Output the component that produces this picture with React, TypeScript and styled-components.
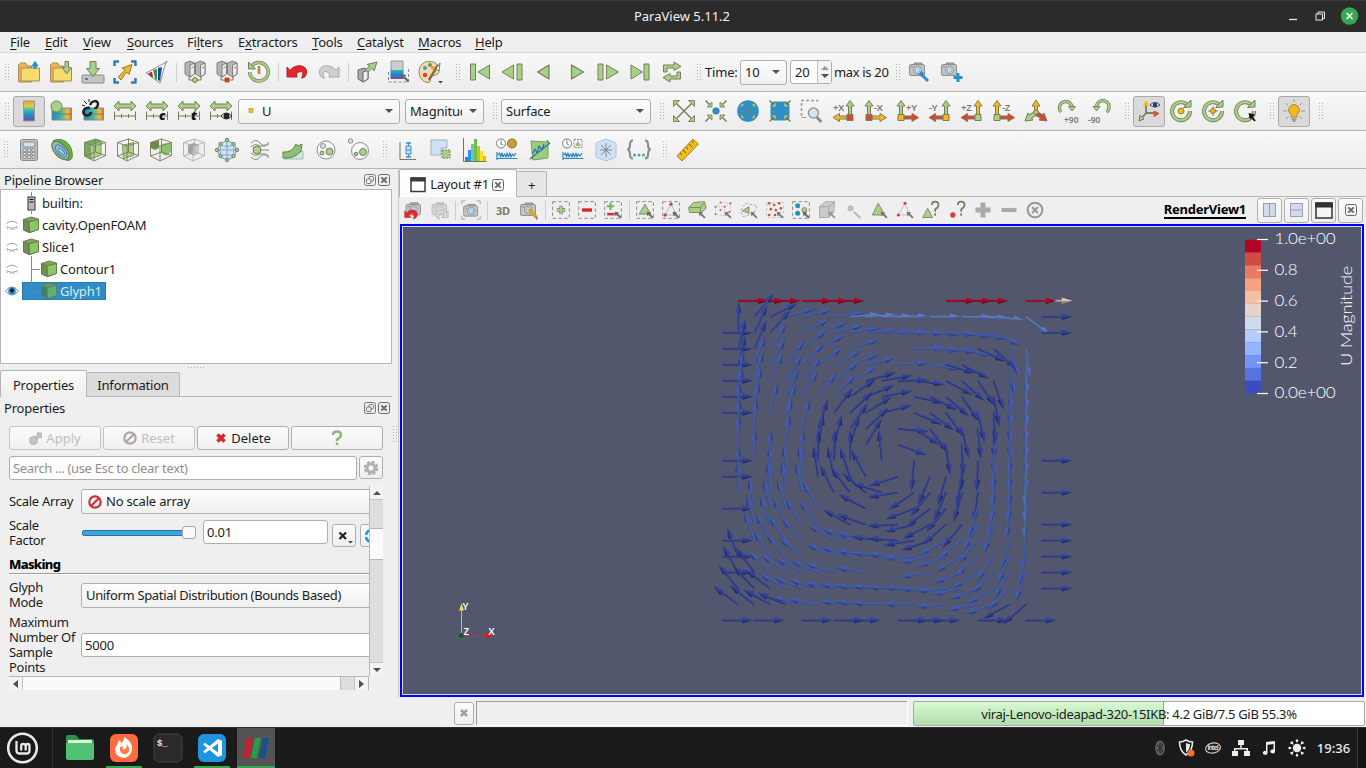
import React from "react";
import styled, { createGlobalStyle, css } from "styled-components";

const GREEN = "#a6d288";
const OLIVE = "#7b7b5c";
const BLUE = "#2a8fcc";
const YEL = "#f4ba1c";
const RED = "#dc4430";
const GREY = "#8c8c8c";

const Global = createGlobalStyle`
  * { box-sizing: border-box; }
  body { margin: 0; overflow: hidden; }
`;

/* ---------- frame ---------- */
const Screen = styled.div`
  width: 1366px;
  height: 768px;
  display: flex;
  flex-direction: column;
  background: #efefef;
  color: #1c1c1c;
  font: 13px/15px "Noto Sans", "Open Sans", sans-serif;
  letter-spacing: -0.2px;
  white-space: nowrap;
  overflow: hidden;
`;
const TitleBar = styled.header`
  height: 32px;
  flex: none;
  display: grid;
  grid-template-columns: 1fr auto 1fr;
  align-items: center;
  background: linear-gradient(#383838 0, #383838 1px, #2b2b2b 1px);
  color: #f2f2f2;
  letter-spacing: 0;
`;
const WindowTitle = styled.span`
  padding-right: 2px;
`;
const WindowControls = styled.div`
  display: flex;
  justify-content: flex-end;
  align-items: center;
  padding-right: 7px;
`;
const MenuBar = styled.nav`
  height: 21px;
  flex: none;
  display: flex;
  padding-left: 10px;
  align-items: center;
  border-bottom: 1px solid #d4d4d4;
  u { text-underline-offset: 2px; text-decoration-thickness: 1px; }
`;
const MenuItem = styled.span<{ $w: number }>`
  width: ${(p) => p.$w}px;
`;
const ToolBar = styled.div<{ $h: number }>`
  height: ${(p) => p.$h}px;
  flex: none;
  display: flex;
  align-items: center;
  background: linear-gradient(#f8f8f8, #ececec);
  border-bottom: 1px solid #b4b4b4;
`;
const HandleBox = styled.span<{ $w: number }>`
  width: ${(p) => p.$w}px;
  padding-left: ${(p) => (p.$w > 13 ? 5 : 1)}px;
  flex: none;
  display: flex;
  justify-content: center;
`;
const Sep = styled.i`
  width: 1px;
  height: 19px;
  margin: 0 2px 0 3px;
  flex: none;
  background: #cfcfcf;
`;
const ToolButton = styled.button<{ $w?: number; $on?: boolean }>`
  width: ${(p) => p.$w ?? 32}px;
  height: 31px;
  flex: none;
  padding: 0;
  display: flex;
  align-items: center;
  justify-content: center;
  border: 1px solid transparent;
  border-radius: 3px;
  background: none;
  ${(p) => p.$on && css`background: #dadada; border-color: #aaa;`}
`;
const fieldBox = css`
  border: 1px solid #aeaeae;
  border-radius: 3px;
  display: flex;
  align-items: center;
`;
const Combo = styled.div<{ $w: number; $ml?: number }>`
  ${fieldBox}
  width: ${(p) => p.$w}px;
  height: 25px;
  margin-left: ${(p) => p.$ml ?? 0}px;
  flex: none;
  padding: 0 6px 0 4px;
  justify-content: space-between;
  background: linear-gradient(#fdfdfd, #f0f0f0);
`;
const IconText = styled.span`
  display: flex;
  align-items: center;
`;
const Clip = styled.span<{ $w: number }>`
  width: ${(p) => p.$w}px;
  line-height: 20px;
  overflow: hidden;
`;
const TimeLabel = styled.span`
  width: 35px;
`;
const Caret = styled.i<{ $up?: boolean; $c?: string }>`
  border: 4px solid transparent;
  border-top: 4px solid ${(p) => p.$c ?? "#505050"};
  border-bottom: 0;
  transform: ${(p) => (p.$up ? "rotate(180deg)" : "none")};
`;
const Spin = styled.div`
  ${fieldBox}
  width: 42px;
  height: 24px;
  margin: 0 2px 0 3px;
  padding-left: 4px;
  justify-content: space-between;
  background: #fff;
`;
const SpinArrows = styled.span`
  width: 14px;
  height: 100%;
  border-left: 1px solid #c0c0c0;
  background: #f3f3f3;
  display: flex;
  flex-direction: column;
  align-items: center;
  justify-content: space-evenly;
`;
const Main = styled.main`
  flex: 1;
  display: flex;
  min-height: 0;
`;

/* ---------- left dock ---------- */
const Dock = styled.aside`
  width: 399px;
  flex: none;
  display: flex;
  border-right: 1px solid #c8c8c8;
`;
const DockBody = styled.div`
  width: 392px;
  display: flex;
  flex-direction: column;
`;
const DockSplitter = styled.div`
  flex: 1;
  display: flex;
  align-items: center;
  justify-content: center;
  padding-top: 2px;
`;
const DockHeader = styled.div<{ $h: number }>`
  height: ${(p) => p.$h}px;
  flex: none;
  padding: 2px 2px 0 4px;
  display: flex;
  align-items: center;
  justify-content: space-between;
`;
const HeaderButtons = styled.span`
  display: flex;
  gap: 2px;
  padding-bottom: 1px;
`;
const Tree = styled.div`
  height: 175px;
  flex: none;
  border: 1px solid #b4b4b4;
  background: #fff;
  padding-top: 2px;
`;
const TreeRow = styled.div`
  height: 22px;
  display: flex;
  align-items: center;
`;
const EyeCell = styled.span`
  width: 21px;
  display: flex;
  justify-content: center;
`;
const TreeItem = styled.span<{ $sel?: boolean }>`
  height: 18px;
  display: flex;
  align-items: center;
  padding-right: 4px;
  ${(p) => p.$sel && css`background: #308cc6; color: #d9e9f4; box-shadow: inset 0 0 0 1px #2a7cb0;`}
`;
const TreeLabel = styled.span`
  padding-left: 2px;
`;
const DotRow = styled.div`
  height: 6px;
  display: flex;
  align-items: center;
  justify-content: center;
  i { width: 17px; height: 1px; background: repeating-linear-gradient(90deg, #b0b0b0 0 1px, transparent 1px 3px); }
`;
const Tabs = styled.div<{ $h: number }>`
  height: ${(p) => p.$h}px;
  flex: none;
  display: flex;
  align-items: flex-end;
  box-shadow: inset 0 -1px #b4b4b4;
`;
const Tab = styled.div<{ $w: number; $on?: boolean; $bg?: string }>`
  width: ${(p) => p.$w}px;
  height: ${(p) => (p.$on ? "100%" : "calc(100% - 2px)")};
  padding-top: 2px;
  border: 1px solid #b4b4b4;
  border-bottom: ${(p) => (p.$on ? "0" : "1px solid #b4b4b4")};
  border-left-width: ${(p) => (p.$on ? 1 : 0)}px;
  border-radius: 2px 2px 0 0;
  background: ${(p) => p.$bg ?? (p.$on ? "linear-gradient(#fafafa, #efefef)" : "#dcdcdc")};
  display: flex;
  align-items: center;
  justify-content: center;
`;
const PushRow = styled.div`
  display: flex;
  gap: 2px;
  padding: 8px 9px 6px;
`;
const Push = styled.button<{ $dim?: boolean }>`
  ${fieldBox}
  width: 92px;
  height: 24px;
  padding: 0;
  justify-content: center;
  gap: 4px;
  font: inherit;
  letter-spacing: 0;
  background: linear-gradient(#fbfbfb, #f0f0f0);
  border-color: ${(p) => (p.$dim ? "#c4c4c4" : "#aeaeae")};
  color: ${(p) => (p.$dim ? "#bfbfbf" : "#1c1c1c")};
`;
const SearchRow = styled.div`
  display: flex;
  gap: 2px;
  padding: 0 9px 6px;
`;
const LineEdit = styled.div<{ $w: number; $dim?: boolean }>`
  ${fieldBox}
  width: ${(p) => p.$w}px;
  height: 24px;
  padding-left: 3px;
  flex: none;
  background: #fff;
  color: ${(p) => (p.$dim ? "#8f8f8f" : "#1c1c1c")};
  letter-spacing: ${(p) => (p.$dim ? -0.35 : -0.2)}px;
`;
const SmallButton = styled.button<{ $w?: number }>`
  ${fieldBox}
  width: ${(p) => p.$w ?? 24}px;
  height: 23px;
  padding: 0;
  flex: none;
  justify-content: center;
  background: linear-gradient(#fbfbfb, #efefef);
`;
const FactorButton = styled(SmallButton)`
  margin: 4px 0 0 4px;
`;
const ScrollArea = styled.div`
  display: grid;
  grid-template-columns: 360px 14px;
  grid-template-rows: 190px 14px;
  margin-left: 9px;
`;
const Form = styled.div`
  overflow: hidden;
`;
const FormRow = styled.div<{ $h: number; $mt: number }>`
  display: grid;
  grid-template-columns: 72px 400px;
  align-items: center;
  height: ${(p) => p.$h}px;
  margin-top: ${(p) => p.$mt}px;
`;
const FormLabel = styled.span`
  white-space: pre;
  letter-spacing: -0.3px;
`;
const NarrowText = styled.span`
  letter-spacing: -0.34px;
`;
const FactorFields = styled.div`
  display: flex;
  align-items: flex-start;
  height: 30px;
  padding-top: 2px;
`;
const Slider = styled.div`
  width: 116px;
  height: 25px;
  margin-right: 6px;
  display: flex;
  align-items: center;
`;
const SliderTrack = styled.i`
  width: 102px;
  height: 6px;
  margin-left: 1px;
  border: 1px solid #2375a8;
  border-radius: 2px;
  background: #3fa4dd;
`;
const SliderThumb = styled.i`
  width: 14px;
  height: 13px;
  margin-left: -2px;
  border: 1px solid #a4a4a4;
  border-radius: 3px;
  background: #fafafa;
`;
const GroupTitle = styled.div`
  height: 17px;
  margin-top: 9px;
  border-bottom: 1px solid #9c9c9c;
  box-shadow: 0 1px #fff;
  font-weight: 800;
  line-height: 14px;
  letter-spacing: -0.7px;
  color: #000;
`;
const VScroll = styled.div`
  display: flex;
  flex-direction: column;
  border-left: 1px solid #b8b8b8;
  background: #dedede;
`;
const HScroll = styled.div`
  display: flex;
  border-top: 1px solid #b8b8b8;
  border-right: 1px solid #b8b8b8;
  background: #dedede;
`;
const ScrollArrow = styled.span<{ $edge: "top" | "bottom" | "left" | "right" }>`
  flex: 0 0 14px;
  display: flex;
  align-items: center;
  justify-content: center;
  background: #f3f3f3;
  border-${(p) => p.$edge}: 1px solid #c2c2c2;
`;
const Thumb = styled.i`
  flex: 0 0 32px;
  margin-top: 28px;
  background: #fafafa;
  border: solid #b8b8b8;
  border-width: 1px 0;
`;
const HThumb = styled.i`
  flex: 0 0 318px;
  background: #fafafa;
  border-right: 1px solid #b8b8b8;
`;
const Fill = styled.i`
  flex: 1;
`;
const Gap = styled.i<{ $w: number }>`
  width: ${(p) => p.$w}px;
  flex: none;
`;

/* ---------- render view ---------- */
const ViewPane = styled.section`
  flex: 1;
  display: flex;
  flex-direction: column;
  min-width: 0;
`;
const ViewTools = styled.div`
  height: 27px;
  flex: none;
  display: flex;
  align-items: center;
  padding: 0 3px 1px 1px;
`;
const ViewName = styled.b`
  margin-left: auto;
  margin-right: 11px;
  border-bottom: 2px solid #000;
  line-height: 15px;
  letter-spacing: -0.25px;
  color: #000;
`;
const FrameButton = styled(SmallButton)`
  width: 25px;
  height: 25px;
  margin-right: 2px;
  &:last-child { margin-right: 0; }
`;
const Viewport = styled.div`
  flex: none;
  width: 964px;
  height: 473px;
  margin-left: 1px;
  border: 2px solid #0000f4;
  background: #52576e;
  box-shadow: inset 0 0 0 1px #d8d8e2;
  svg { display: block; }
`;

/* ---------- status + panel ---------- */
const StatusBar = styled.footer`
  height: 29px;
  flex: none;
  display: flex;
  align-items: center;
  justify-content: flex-end;
  padding: 1px 1px 0 0;
`;
const StatusWell = styled.div`
  width: 431px;
  height: 24px;
  margin: 0 6px 0 2px;
  border: solid #9c9c9c;
  border-width: 1px 0 0 1px;
  box-shadow: 1px 1px #fff;
`;
const MemoryBar = styled.div`
  width: 452px;
  height: 25px;
  padding-top: 2px;
  border: 1px solid #a8a8a8;
  border-radius: 2px;
  display: flex;
  align-items: center;
  justify-content: center;
  letter-spacing: -0.31px;
  background: linear-gradient(90deg, transparent 249px, #86a884 249px, #86a884 250px, transparent 250px), linear-gradient(#d6fbd2, #b2dcae) 0 0 / 250px 100% no-repeat, #fff;
`;
const Panel = styled.footer`
  height: 41px;
  flex: none;
  display: flex;
  background: #1a1a1a;
  border-top: 1px solid #2c2c2c;
  color: #eee;
`;
const PanelApp = styled.div<{ $w: number; $run?: boolean; $active?: boolean; $line?: boolean }>`
  width: ${(p) => p.$w}px;
  display: flex;
  align-items: center;
  justify-content: center;
  ${(p) => p.$active && css`background: #545454;`}
  ${(p) => p.$run && css`background: linear-gradient(#35a854, #35a854) 50% 100% / 38px 2px no-repeat ${p.$active ? "#545454" : "transparent"};`}
  ${(p) => p.$line && css`border-right: 1px solid #303030; padding-right: 5px;`}
`;
const Tray = styled.div`
  margin-left: auto;
  display: flex;
  align-items: center;
`;
const TrayCell = styled.span<{ $w: number }>`
  width: ${(p) => p.$w}px;
  display: flex;
  justify-content: center;
`;
const Clock = styled.time`
  width: 46px;
  padding-right: 1px;
  text-align: center;
  font-weight: 500;
  letter-spacing: 0;
`;
const PanelEdge = styled.i`
  width: 9px;
  height: 100%;
  border-left: 1px solid #3a3a3a;
  background: #141414;
`;

/* ---------- glyph pieces ---------- */
type SvgProps = { s?: number; children?: React.ReactNode };
const Ico = ({ s = 24, children }: SvgProps) => (
  <svg width={s} height={s} viewBox="0 0 24 24" fill="none" strokeLinejoin="round" overflow="visible">{children}</svg>
);
const HandleDots = () => (
  <svg width="5" height="17" fill="none" stroke="#b4b4b4"><path d="M.5 0v17" strokeDasharray="1 2" /><path d="M3.500 0v17" strokeDasharray="1 2" /></svg>
);
const G = { fill: GREEN, stroke: OLIVE };
const Camera = ({ dim }: { dim?: boolean }) => (
  <g stroke="#8f8f8f" opacity={dim ? 0.55 : 1}>
    <path d="M6 5V3h8v2" fill="#aaa" />
    <rect x="1.5" y="4.5" width="15" height="11" rx="1.5" fill="#c4c4c4" />
    <circle cx="9.5" cy="10" r="4" fill="#e8e8e8" />
    <circle cx="9.5" cy="10" r="2.5" fill="#bfdcf2" stroke="#8ab6d8" />
    <path d="M3 7h2" stroke="#c06060" />
  </g>
);
const Bars = ({ m }: { m?: React.ReactNode }) => (
  <Ico>
    <path d="M1 7l5-5v3h12V2l5 5-5 5V9H6v3z" {...G} />
    <path d="M1.500 12.500v8.500M22.500 12.500v8.500M1.500 17h21M8.500 15v4M15.500 15v4" stroke={OLIVE} />
    {m}
  </Ico>
);
const Letter = ({ t }: { t: string }) => (
  <text x="14" y="21" fontFamily="Noto Sans" fontWeight="900" fontStyle="italic" fontSize="13" fill="#111">{t}</text>
);
const Wire = ({ front, dim }: { front: React.ReactNode; dim?: boolean }) => (
  <Ico>
    {dim && <path d="M1.500 4.500l11-3.500 10 3.500v13L11 23 1.500 18z" fill="#eee" />}
    {front}
    <path d="M1.500 4.500l11-3.500 10 3.500v13L11 23 1.500 18zM1.500 4.500L11 8l11.500-3.500M11 8v15M12.500 1v13l10 3.500M12.500 14l-11 4" stroke={dim ? "#b0b0b0" : OLIVE} strokeWidth=".9" />
  </Ico>
);
const SlimCursor = ({ c = "#777" }: { c?: string }) => (
  <g><path d="M14 14l5.500 1-4.500 4.500z" fill={c} /><path d="M16 16l5.500 5.500" stroke={c} strokeWidth="2.300" /></g>
);
const Sel = ({ children, mark }: { children?: React.ReactNode; mark?: boolean }) => (
  <Ico s={20}>
    <rect x="2" y="2" width="20" height="20" stroke="#8a8a8a" strokeWidth="1.200" strokeDasharray="4 3" />
    {children}
    {mark && <SlimCursor c="#666" />}
  </Ico>
);
const AxisIcon = ({ t, left, up, side, box }: { t: string; left?: boolean; up: string; side: string; box: string }) => {
  const x = left ? 5 : 18;
  return (
    <Ico>
      <path d={`M${x - 1.5} 16V7h-2.500L${x} 1.500l4 5.500h-2.500v9z`} fill={up} stroke={OLIVE} />
      <path d={left ? "M8 17h8v-2.500l6.500 4-6.500 4V20H8z" : "M15 17H7.500v-2.500L1 18.500l6.500 4V20H15z"} fill={side} stroke={OLIVE} />
      <rect x={x - 3} y="15.500" width="6" height="6" fill={box} stroke={OLIVE} />
      <text x={left ? 10 : 1} y="11.500" fontFamily="Noto Sans" fontSize="9.500" fontWeight="600" fill="#777" letterSpacing="-.3">{t}</text>
    </Ico>
  );
};
const Tri = ({ d }: { d: string }) => <Ico><path d={d} {...G} strokeWidth="1.200" /></Ico>;
const Diag = ({ inward, s = 1 }: { inward?: boolean; s?: number }) => (
  <g>
    {[0, 90, 180, 270].map((a) => (
      <g key={a} transform={`rotate(${a} 12 12) translate(12 12) scale(${s}) translate(-12 -12)`}>
        {inward ? (
          <><path d="M1.500 1.500l5 5" stroke={OLIVE} strokeWidth="1.500" /><path d="M8 8H3l5-5z" {...G} strokeWidth=".8" /></>
        ) : (
          <><path d="M4 4l8 8" stroke={OLIVE} strokeWidth="1.500" /><path d="M1.500 1.500h6l-6 6z" {...G} strokeWidth=".9" /></>
        )}
      </g>
    ))}
  </g>
);
const Ring = ({ children }: { children?: React.ReactNode }) => (
  <Ico>
    <path d="M18 5.500A9 9 0 1 0 21 12" stroke={OLIVE} strokeWidth="4" />
    <path d="M18 5.500A9 9 0 1 0 21 12" stroke={GREEN} strokeWidth="2.200" />
    <path d="M14.500 8.500l7.500-.5V1z" {...G} />
    {children}
  </Ico>
);
const CubeSvg = styled.svg`
  flex: none;
`;
const Cube = ({ sel }: { sel?: boolean }) => (
  <CubeSvg width="18" height="18" viewBox="0 0 18 18" strokeLinejoin="round" stroke={sel ? "#5b7f62" : "#6b7250"} strokeWidth=".9">
    <path d="M1.500 3.500L9 1l7.500 2v10.500l-8.500 3L1.500 14z" fill={sel ? "#5c9a70" : "#79a757"} />
    <path d="M1.500 3.500L7 5.800v10.700L1.500 14z" fill={sel ? "#3d7f6a" : "#6f8f55"} />
    <path d="M7 5.800l9.500-2.300v10l-9 3z" fill={sel ? "#5cb277" : "#88c868"} />
  </CubeSvg>
);
const Server = ({ x }: { x: number }) => (
  <g transform={`translate(${x} 0)`} stroke="#777" strokeWidth=".9">
    <path d="M.5 3l5-2 4.500 2v11l-4.500 3-5-3z" fill="#b5b5b5" />
    <path d="M5.500 5L10 3v11l-4.500 3z" fill="#efe9ea" />
    <path d="M7 8l2-1" />
  </g>
);
const Magnifier = () => (
  <g>
    <path d="M16.500 17l5 5" stroke="#8b8b8b" strokeWidth="3" />
    <circle cx="13.500" cy="13" r="5" fill="#d3e6f5" stroke="#999" strokeWidth="1.500" />
  </g>
);
const ClockFace = () => <g stroke="#6f777c"><circle cx="6" cy="5.500" r="4.500" fill="#fff" /><path d="M6 2.500v3.500l2 1" /></g>;
const Wave = () => <path d="M2 14v8M1.500 20.500h21M3 17l1.500-2 1 4 1.500-4 1 4 1.500-3 1.500 3 1-4 1.500 4 1.500-4 1 4 1.500-3 1.500 2 2-3" stroke="#2b86c0" strokeWidth="1.200" />;

const ICONS: Record<string, React.ReactNode> = {
  open: <Ico><path d="M1.500 22V5l2-2h5l2 3h4v16z" fill="#f0b45a" stroke="#a78b4f" /><rect x="4" y="8" width="18.500" height="13" fill="#f5db70" stroke="#a78b4f" /><path d="M15 6L18 1.500 21 6h-2v2.500h-2V6z" fill={BLUE} stroke={BLUE} /></Ico>,
  load: <Ico><path d="M1.500 22V5l2-2h5l2 3h4v16z" fill="#f0b45a" stroke="#a78b4f" /><rect x="4" y="8" width="18.500" height="13" fill="#f5db70" stroke="#a78b4f" /><path d="M16 1.500h3.500v6H22l-4.300 6.500-4.500-6.500H16z" {...G} /></Ico>,
  save: <Ico><rect x="1" y="15" width="22" height="8" rx="1" fill="#c4c4c4" stroke="#8a8a8a" /><path d="M4 19h3" stroke="#777" strokeWidth="2" /><path d="M9 1.500h6v7h3.500L12 16.500 5.500 8.500H9z" {...G} /></Ico>,
  reset: <Ico><path d="M1.500 6V1.500H6M18 1.500h4.500V6M22.500 18v4.500H18M6 22.500H1.500V18" stroke="#2f7fae" strokeWidth="2.500" /><path d="M5 17l7-7-3-2 10-3.500-3 10-2.500-2.500L8 20z" fill={YEL} stroke="#8d7c3f" /></Ico>,
  pvload: <Ico><path d="M1 13L18 4l4-3-2 4-5 18z" fill="#fff" stroke="#8a8a8a" /><path d="M3 13.500l4-2 1 5-1 1z" fill="#c02030" /><path d="M8 10l4-1v11l-2-1z" fill="#2f9c48" /><path d="M13 8l4-1-2 14-2-1z" fill="#154a92" /></Ico>,
  connect: <Ico><path d="M6 16v4h12v-4" stroke={OLIVE} /><Server x={1.5} /><Server x={12} /><circle cx="12" cy="20" r="2.500" {...G} /></Ico>,
  disconnect: <Ico><path d="M6 16v4h12v-4" stroke={OLIVE} /><Server x={1.5} /><Server x={12} /><path d="M10 18l4 4M14 18l-4 4" stroke="#cf3a30" strokeWidth="2.500" /></Ico>,
  recent: <Ico><path d="M4 7a9.300 9.300 0 1 1-1.300 5" stroke={OLIVE} strokeWidth="3.500" /><path d="M4 7a9.300 9.300 0 1 1-1.300 5" stroke={GREEN} strokeWidth="2" /><path d="M1.500 2v7h7z" {...G} /><path d="M12 6v8" stroke="#b08b2a" strokeWidth="2.500" /></Ico>,
  undo: <Ico><path d="M2 17V7l3 3.500C9 4 22 4 21.500 12c0 4-2 6-5 6 3-5 1-9-5-4.500L12 17z" fill="#e2262a" stroke="#b12020" /></Ico>,
  redo: <Ico><path d="M22 17V7l-3 3.500C15 4 2 4 2.500 12c0 4 2 6 5 6-3-5-1-9 5-4.500L12 17z" fill="#cfcfcf" stroke="#a8a8a8" /></Ico>,
  extract: <Ico><path d="M3 10l6-2 4 2v9l-5 3-5-3z" fill="#a9a9a9" stroke="#666" /><path d="M8 12l5-2v9l-5 3z" fill="#eee" stroke="#666" /><path d="M10 10l5-4-3-1.500L22 2l-3 9-1.500-3L13 12z" {...G} /></Ico>,
  cmap: <Ico><defs><linearGradient id="cm" x2="0" y2="1"><stop stopColor="#22b8b2" /><stop offset=".5" stopColor="#2680d0" /><stop offset="1" stopColor="#7a4a9c" /></linearGradient></defs><rect x="4" y="1" width="12" height="10" fill="#ccc" stroke="#999" /><path d="M1.500 12v10h20V9" stroke="#888" strokeDasharray="3 2" /><rect x="3.500" y="10" width="13" height="9" fill="url(#cm)" /><SlimCursor c="#666" /></Ico>,
  palette: <svg width="26" height="24" viewBox="0 0 26 24"><path d="M11 1.500C4 1.500 1 7 1 12s4 10.500 9 10.500c4 0 1-4 3-6s8 0 8-6-4-9-10-9z" fill="#f2d9b0" stroke="#8d8463" /><circle cx="12" cy="5" r="2" fill="#6aa03c" /><circle cx="7" cy="8" r="2" fill="#3a9ed2" /><circle cx="7" cy="15" r="2.200" fill="#dc4432" /><circle cx="15" cy="8" r="2" fill="#e6a04a" /><path d="M20 5L11 20" stroke="#8c6e3c" strokeWidth="2.500" /><path d="M18 9l4-6-1 8z" fill="#fff" stroke="#777" /><path d="M20 21h5l-2.500 2.500z" fill="#444" /></svg>,
  first: <Ico><rect x="2.500" y="4" width="5" height="16" {...G} /><path d="M21.500 5v14L10 12z" {...G} /></Ico>,
  prev: <Ico><rect x="17" y="4" width="5" height="16" {...G} /><path d="M13.500 5v14L2 12z" {...G} /></Ico>,
  back: <Tri d="M17 5v14L5.500 12z" />,
  play: <Tri d="M7.500 5v14l12-7z" />,
  next: <Ico><rect x="2" y="4" width="5" height="16" {...G} /><path d="M10.500 5v14l12-7z" {...G} /></Ico>,
  last: <Ico><path d="M3 5v14l11.500-7z" {...G} /><rect x="16" y="4" width="5" height="16" {...G} /></Ico>,
  loop: <Ico><path d="M3.500 12V5H14V2l7 4.500-7 4V8H7v4zM20.500 12v7H10v3l-7-4.500 7-4V16h7v-4z" {...G} /></Ico>,
  camWrench: <Ico><Camera /><path d="M12 13l8 8" stroke={BLUE} strokeWidth="3" /><path d="M12 15.500l3-3" stroke={BLUE} strokeWidth="4" /></Ico>,
  camAdd: <Ico><Camera /><path d="M18 13v9M13.500 17.500h9" stroke={BLUE} strokeWidth="3" /></Ico>,
  legend: <Ico><defs><linearGradient id="lg" x2="0" y2="1"><stop stopColor="#e0a030" /><stop offset=".25" stopColor="#d8d050" /><stop offset=".5" stopColor="#28b4b0" /><stop offset=".75" stopColor="#2680d0" /><stop offset="1" stopColor="#7a4a9c" /></linearGradient></defs><rect x="6.500" y="2" width="11" height="20" fill="url(#lg)" stroke="#999" /></Ico>,
  editmap: <Ico><defs><linearGradient id="hz"><stop stopColor="#2680d0" /><stop offset=".4" stopColor="#28b4b0" /><stop offset=".8" stopColor="#e8c040" /><stop offset="1" stopColor="#d87830" /></linearGradient></defs><rect x="3" y="9" width="19.500" height="12" fill="url(#hz)" stroke="#888" /><path d="M3 15h19" stroke="#777" /><circle cx="7.500" cy="7.500" r="5.500" {...G} /></Ico>,
  link: <Ico><rect x="3" y="9" width="19.500" height="12" fill="url(#hz)" stroke="#888" /><path d="M3 15h19" stroke="#777" /><path d="M9 6c2-5 8-5 8-1s-3 4-3 5M9 9c-5-1-8 3-6 6s7 1 7-2" stroke="#222" strokeWidth="2.500" /><path d="M3 2l3 3M1 6l3 1M8 0v3" stroke="#222" /></Ico>,
  rescale: <Bars />,
  rescaleC: <Bars m={<Letter t="c" />} />,
  rescaleT: <Bars m={<Letter t="t" />} />,
  rescaleV: <Bars m={<g><path d="M12 17q5-6 11 0-6 6-11 0z" fill="#fff" stroke="#222" /><circle cx="17.500" cy="17" r="3" fill="#222" /></g>} />,
  fit: <Ico><Diag /></Ico>,
  fitData: <Ico><Diag inward /><circle cx="12" cy="12" r="3.300" fill={BLUE} stroke="#2374a6" strokeWidth=".6" /></Ico>,
  fitC: <Ico><circle cx="12" cy="12" r="10.800" fill={BLUE} /><Diag s={0.68} /></Ico>,
  fitD: <Ico><rect x="2.500" y="2.500" width="19" height="19" rx="4" fill={BLUE} /><Diag inward /></Ico>,
  zoomBox: <Ico><path d="M1.500 17V1.500h17" stroke="#999" strokeDasharray="3 2" strokeWidth="1.500" /><path d="M1.500 18.500h5" stroke="#999" /><g transform="translate(0 1)"><Magnifier /></g></Ico>,
  pX: <AxisIcon t="+X" up={GREEN} side={YEL} box={RED} />,
  mX: <AxisIcon t="-X" left up={GREEN} side={YEL} box={RED} />,
  pY: <AxisIcon t="+Y" left up={GREEN} side={RED} box={YEL} />,
  mY: <AxisIcon t="-Y" up={GREEN} side={RED} box={YEL} />,
  pZ: <AxisIcon t="+Z" up={YEL} side={RED} box={GREEN} />,
  mZ: <AxisIcon t="-Z" left up={YEL} side={RED} box={GREEN} />,
  iso: <Ico><path d="M10.500 14V7H8l4-6 4 6h-2.500v7z" fill={YEL} stroke={OLIVE} /><path d="M11 12.500l-6 3.500-1-2-3 8 8-1-1.500-2 5.500-3z" {...G} /><path d="M13 12.500l6 3.500 1-2 3 8-8-1 1.500-2-5.500-3z" fill={RED} stroke={OLIVE} /><path d="M12 11l3 2-3 3-3-3z" {...G} /></Ico>,
  r90: <Ico><path d="M5 13a6.300 6.300 0 1 1 11-4.500" stroke={OLIVE} strokeWidth="3.300" /><path d="M5 13a6.300 6.300 0 1 1 11-4.500" stroke={GREEN} strokeWidth="1.800" /><path d="M12.500 7.500h7L16 12z" {...G} strokeWidth=".9" /><text x="8" y="23.500" fontFamily="Noto Sans" fontWeight="600" fontSize="8.500" fill="#777">+90</text></Ico>,
  l90: <Ico><path d="M18.500 13a6.300 6.300 0 1 0-10-5" stroke={OLIVE} strokeWidth="3.300" /><path d="M18.500 13a6.300 6.300 0 1 0-10-5" stroke={GREEN} strokeWidth="1.800" /><path d="M5 7.500h7L8.500 12z" {...G} strokeWidth=".9" /><text x="0" y="23.500" fontFamily="Noto Sans" fontWeight="600" fontSize="8.500" fill="#777">-90</text></Ico>,
  axes: <Ico><path d="M9 14V5M9 14h10M9 14l-5 6" stroke="#8a7a50" strokeWidth="1.800" /><path d="M6.500 6L9 2l2.500 4z" fill={YEL} stroke={YEL} /><path d="M17 12l5 2.500-5 3z" fill="#d9542c" stroke="#d9542c" /><path d="M3 16l4 4-5 2z" {...G} /><path d="M13 6q5-5 10 0-5 4-10 0z" fill="#fff" stroke="#333a66" /><circle cx="18" cy="6" r="2.300" fill="#333a66" /></Ico>,
  ringA: <Ring><circle cx="12" cy="12" r="3" fill={YEL} stroke="#8d7c3f" /></Ring>,
  ringB: <Ring><path d="M12 7v10M7 12h10" stroke={OLIVE} /><circle cx="12" cy="12" r="2.500" fill={YEL} stroke="#8d7c3f" /></Ring>,
  ringC: <Ring><path d="M15.500 14l6.500 1.500-5 5z" fill="#111" /><path d="M18 17l4 5" stroke="#111" strokeWidth="2" /></Ring>,
  bulb: <Ico><path d="M12 0v3M4 4l2 2M20 4l-2 2M1 12h4M19 12h4M4 20l2.500-2.500M20 20l-2.500-2.500" stroke="#999" /><path d="M12 5.500a5.500 5.500 0 0 1 3 10V18H9v-2.500a5.500 5.500 0 0 1 3-10z" fill={YEL} stroke="#a88a30" /><path d="M9.500 20h5M10.500 22h3" stroke="#888" strokeWidth="1.500" /></Ico>,
  calc: <Ico><rect x="3.500" y="1.500" width="17" height="21" rx="2" fill="#c2c2c2" stroke="#8a8a8a" /><rect x="6" y="4" width="12" height="5" rx="1" fill="#cfe2f3" stroke="#8a8a8a" />{[6, 10.5, 15].map((x) => [11, 14.5, 18].map((y) => <rect key={x + "-" + y} x={x} y={y} width="3" height="2.400" fill="#fff" stroke="#777" strokeWidth=".8" />))}</Ico>,
  contour: <Ico><path d="M3 3C12-2 24 6 22 20c-1 2-4 3-6 2z" fill="#69b548" stroke="#4f7d35" /><ellipse cx="10.500" cy="12.500" rx="6" ry="11" transform="rotate(-42 10.500 12.500)" fill="#9db6bd" stroke="#5b8a3f" strokeWidth="1.300" /><ellipse cx="11" cy="13" rx="3.800" ry="7.500" transform="rotate(-42 11 13)" stroke="#4b86ac" strokeWidth="1.200" fill="#8fbedb" /><ellipse cx="11.500" cy="13.500" rx="1.600" ry="4" transform="rotate(-42 11.500 13.500)" fill="#b5ccd8" stroke="#4b86ac" /></Ico>,
  clip: <Wire front={<><path d="M1.500 4.500L12.500 1l6 2v4L8 21.500 1.500 18z" fill="#7ba85a" /><path d="M7 7l11-3v13L8 21z" fill={GREEN} stroke="#7d9a60" /></>} />,
  slice: <Wire front={<path d="M6.500 7.500l11-3v13l-10 3z" fill={GREEN} stroke="#7d9a60" />} />,
  threshold: <Wire front={<><path d="M1.500 4.500L10 2v8l-4 2-4.500-2z" fill="#6a8f4c" /><path d="M12.500 6l10-1.500v9L17 18l-5-3z" fill="#8cc26a" /></>} />,
  subset: <Wire dim front={<><path d="M6 7l6-2 5 2v8l-5 3-6-3z" fill="#a0a0a0" /><path d="M11 9l6-2v8l-6 3z" fill="#cacaca" /></>} />,
  glyph: <Ico><path d="M12 2l7 4 3 6-3 7-7 3-7-3-3-7 3-6z" fill="#cfe3f4" stroke="#6f9dc0" /><path d="M2 12h20M12 2v20M5 6q7 5 14 0M5 19q7-5 14 0M7 4q-4 8 0 16M17 4q4 8 0 16" stroke="#7aa3c4" strokeWidth=".9" />{[[12, 2], [12, 22], [2, 12], [22, 12], [5.5, 6], [18.5, 6], [5.5, 18], [18.5, 18]].map(([x, y]) => <circle key={x + "," + y} cx={x} cy={y} r="1.700" {...G} />)}</Ico>,
  stream: <Ico><path d="M3 5q5-5 9 0t9-1M3 9q4-4 7-2 6 3 11-1M3 19q5 5 9 0t9 1M3 15q4 4 7 2 6-3 11 1" stroke="#8a8a8a" /><circle cx="9" cy="12" r="4" {...G} /><path d="M13 12h8" stroke="#8a8a8a" /></Ico>,
  warp: <Ico><path d="M3 20.500L22 13v8H3z" fill="#cde9e4" stroke="#9cbfb8" /><path d="M2 20v-6q9 1 13-8l2 2 4-2-1 7q-6 8-18 7z" fill="#8fbf72" stroke="#62804a" /></Ico>,
  group: <Ico><circle cx="12" cy="12" r="9" fill="#fafafa" stroke={GREY} /><circle cx="9" cy="8" r="2.500" fill="#cfe3e8" stroke={GREY} /><circle cx="15.500" cy="13.500" r="3.500" {...G} /><circle cx="8" cy="15" r="2" {...G} /></Ico>,
  level: <Ico><circle cx="13" cy="13" r="8.500" fill="#fafafa" stroke={GREY} /><circle cx="3.500" cy="3" r="2.200" fill="#cfe3e8" stroke={GREY} /><circle cx="16" cy="14" r="3.500" {...G} /><circle cx="9" cy="16" r="1.800" {...G} /></Ico>,
  boxplot: <Ico><path d="M4 4v17.500h16" stroke="#777750" /><path d="M12.500 5v14M10 5h5M10 19h5" stroke="#3e8cc4" strokeWidth="1.300" /><rect x="10" y="8" width="5" height="8" fill="#c8e0f2" stroke="#3e8cc4" /><path d="M10 12h5" stroke="#3e8cc4" /></Ico>,
  selOver: <Ico><path d="M2 2h16v8h-6v7H2z" fill="#cfe1f3" stroke="#9db2c4" /><rect x="13" y="12" width="8" height="8" fill={GREEN} stroke={OLIVE} strokeDasharray="2 1" /></Ico>,
  hist: <svg width="26" height="26" viewBox="0 0 26 26"><path d="M2.500 1v23.500h23" stroke="#777750" fill="none" /><path d="M4 20h3v4H4z" fill="#2b86c0" /><path d="M7 13h3v11H7z" fill="#2196f3" /><path d="M10 7h3v17h-3z" fill="#6fc6a8" /><path d="M13 2h3v22h-3z" fill="#6cc04a" /><path d="M16 9h3v15h-3z" fill="#b5c832" /><path d="M19 14h3v10h-3z" fill="#ffe01e" /><path d="M22 19h3v5h-3z" fill="#f5b61a" /></svg>,
  timeA: <Ico><ClockFace /><circle cx="17" cy="5.500" r="4.500" fill="#c9a034" stroke="#8a6f2a" /><Wave /></Ico>,
  overLine: <Ico><path d="M3 3l17 1v16L5 22z" fill="#9ace7c" stroke="#7d9a60" /><path d="M3 20L22 5M4 16l3-5 2 4 2-7 3 4 2-6" stroke="#2b78ac" strokeWidth="1.300" /><path d="M1.500 21l3-1M19 2l2 3" stroke="#555" /></Ico>,
  timeB: <Ico><ClockFace /><rect x="13" y="1.500" width="8" height="8" stroke="#888" strokeDasharray="2 1" /><path d="M17 3l3 5h-6z" fill="#8fc46f" /><Wave /></Ico>,
  probe: <Ico><path d="M12 1l10 4v14l-10 4-10-4V5z" fill="#cfe1f3" stroke="#a9c6de" /><path d="M12 5v14M6 12h12M7 7l10 10M17 7L7 17" stroke="#6e8392" strokeWidth=".9" /></Ico>,
  prog: <Ico><path d="M6 2.500q-3 0-3 4t-2 5q2 1 2 5t3 4M18 2.500q3 0 3 4t2 5q-2 1-2 5t-3 4" stroke="#8a8a8a" strokeWidth="2" />{[7.5, 12, 16.5].map((x) => <circle key={x} cx={x} cy="17" r="1.500" fill="#4fa3b8" />)}</Ico>,
  ruler: <Ico><path d="M1 18L17 1l5.500 5L6 23z" fill={YEL} stroke="#9a8434" /><path d="M4 15l2 2M7 12l3 3M10 9l2 2M13 6l3 3M16 3l2 2" stroke="#6b5c28" /></Ico>,

  vUndo: <Ico s={20}><g transform="translate(2 0) scale(1.150)"><Camera /></g><path d="M2 13v8h8l-3-2.500c2-2.500 5-2.500 6 0 .5 1.500 0 3-1 4.500 4-1 6-4 5-7.500-2-5-9-5-12.500 0z" fill="#e2262a" stroke="#b83030" strokeWidth=".6" /></Ico>,
  vRedo: <Ico s={20}><g transform="translate(2 0) scale(1.150)"><Camera dim /></g><path d="M23 13v8h-8l3-2.500c-2-2.500-5-2.500-6 0-.5 1.500 0 3 1 4.500-4-1-6-4-5-7.500 2-5 9-5 12.500 0z" fill="#d6d6d6" stroke="#b0b0b0" strokeWidth=".8" /></Ico>,
  vShot: <Ico s={20}><path d="M1 5V1h4M19 1h4v4M23 19v4h-4M5 23H1v-4" stroke="#999" /><g transform="translate(1.500 2) scale(1.120)"><Camera /></g></Ico>,
  v3D: <svg width="20" height="16" viewBox="0 0 20 16"><text x="3" y="12.500" fontFamily="Noto Sans" fontWeight="700" fontSize="11" fill={OLIVE} textLength="14">3D</text></svg>,
  vCam: <Ico s={20}><g transform="scale(1.200)"><Camera /></g><path d="M12 11l9 10" stroke="#d8a822" strokeWidth="4" /><path d="M20 20l2 3" stroke="#777" strokeWidth="2" /></Ico>,
  sAdd: <Sel><path d="M12 7v10M7 12h10" stroke={OLIVE} strokeWidth="4" /><path d="M12 7.500v9M7.500 12h9" stroke={GREEN} strokeWidth="2.500" /></Sel>,
  sSub: <Sel><rect x="6" y="10" width="12" height="4" fill="#d62626" /></Sel>,
  sTog: <Sel mark><path d="M9 3v9M4.500 7.500h9" stroke="#7ab060" strokeWidth="2.500" /><path d="M5 17h9" stroke="#c83040" strokeWidth="3" /></Sel>,
  sCell: <Sel mark><path d="M12 5l7 12H5z" {...G} /></Sel>,
  sPt: <Sel mark><path d="M12 5L5 18h14z" stroke="#aaa" /><circle cx="12" cy="5" r="2" fill="#b84a3c" /><circle cx="5" cy="18" r="2" fill="#b84a3c" /></Sel>,
  sFr: <Ico s={20}><path d="M2 9l6-6 13-1 2 8-6 5H3z" {...G} /><path d="M3 9h13l5-6M16 9v6" stroke={OLIVE} /><SlimCursor /></Ico>,
  sFrP: <Ico s={20}><path d="M3 8l6-5 12 1-1 11-6 4-11-2zM3 8h11l7-4M14 8v11" stroke="#bbb" strokeDasharray="2 1.500" />{[[3, 8], [9, 3], [21, 4], [14, 8], [3, 17], [20, 14], [9, 12]].map(([x, y]) => <circle key={x + "," + y} cx={x} cy={y} r="1.200" fill="#e05050" />)}<SlimCursor /></Ico>,
  sPoly: <Ico s={20}><path d="M2 12L8 4l14 3-5 9-12 4z" stroke="#999" strokeDasharray="3 2" /><path d="M4 13l8-5v8z" {...G} /><SlimCursor /></Ico>,
  sPolyP: <Ico s={20}><path d="M2 3h20v18H2z" stroke="#bbb" strokeDasharray="3 3" />{[[5, 4], [11, 6], [17, 4], [7, 11], [13, 12], [19, 10], [5, 18], [12, 18]].map(([x, y]) => <circle key={x + "," + y} cx={x} cy={y} r="1.600" fill="#c85240" />)}<SlimCursor /></Ico>,
  sBlk: <Sel mark><circle cx="8" cy="7" r="3" fill="#2a8fb8" /><circle cx="8" cy="16" r="3" fill="#2a8fb8" /><circle cx="16" cy="12" r="3" {...G} /></Sel>,
  sCube: <Ico s={20}><path d="M3 8l7-6h11l-1 13-6 6H3z" fill="#cacaca" stroke="#a4a4a4" /><path d="M3 8h11l7-6M14 8v13" stroke="#a0a0a0" /><SlimCursor c="#999" /></Ico>,
  hPt: <Ico s={20}><circle cx="9" cy="10" r="3" fill="#c4c4c4" stroke="#aaa" /><path d="M13 14l8 8" stroke="#bbb" strokeWidth="2.500" /></Ico>,
  iCell: <Ico s={20}><path d="M11 4l8 14H4z" {...G} /><SlimCursor /></Ico>,
  iPt: <Ico s={20}><path d="M12 4L4 18h14z" stroke="#bbb" /><circle cx="12" cy="4" r="1.800" fill="#b84a3c" /><circle cx="4" cy="18" r="1.800" fill="#b84a3c" /><SlimCursor /></Ico>,
  qCell: <Ico s={20}><path d="M8 10l6 11H2z" {...G} /><path d="M13 6q0-4 4-4t4 4q0 3-4 5v3M17 16v3" stroke={OLIVE} strokeWidth="2" /></Ico>,
  qPt: <Ico s={20}><circle cx="7" cy="18" r="3.200" fill="#d8402c" /><path d="M13 6q0-4 4-4t4 4q0 3-4 5v3M17 16v3" stroke={OLIVE} strokeWidth="2" /></Ico>,
  plus: <Ico s={20}><path d="M12 3v18M3 12h18" stroke="#aaa" strokeWidth="6" /></Ico>,
  minus: <Ico s={20}><path d="M3 12h18" stroke="#aaa" strokeWidth="5" /></Ico>,
  clear: <Ico s={20}><circle cx="12" cy="12" r="8.800" stroke="#999" strokeWidth="2.500" /><path d="M8.500 8.500l7 7M15.500 8.500l-7 7" stroke="#999" strokeWidth="2.500" /></Ico>,
};

const Tools = ({ names, w, on = [] }: { names: string; w?: number; on?: string[] }) => (
  <>
    {names.split(" ").map((n, i) =>
      n === "|" ? <Sep key={i} /> : <ToolButton key={i} $w={w} $on={on.includes(n)}>{ICONS[n]}</ToolButton>
    )}
  </>
);
const Handle = ({ w = 17 }: { w?: number }) => <HandleBox $w={w}><HandleDots /></HandleBox>;
const FloatIcon = () => (
  <svg width="12" height="12" viewBox="0 0 12 12" fill="none" stroke="#777"><rect x=".5" y=".5" width="11" height="11" rx="2" /><rect x="5" y="2.500" width="4.500" height="4.500" rx="1" /><rect x="2.500" y="5" width="4.500" height="4.500" rx="1" fill="#efefef" /></svg>
);
const CloseIcon = () => (
  <svg width="12" height="12" viewBox="0 0 12 12" fill="none" stroke="#666"><rect x=".5" y=".5" width="11" height="11" rx="2" /><path d="M3.300 3.300l5.400 5.400M8.700 3.300L3.300 8.700" strokeWidth="1.900" /></svg>
);
const EyeClosed = () => (
  <svg width="12" height="10" viewBox="0 0 12 10" fill="none" stroke="#a0a0a0"><path d="M.5 3.500Q6-1 11.500 3.500M.5 6.500q5.500 3.500 11 0M2 7.500L1 9M5 8.500v1.500M8 8.500V10M10.500 7l1 1.500" /></svg>
);
const EyeOpen = () => (
  <svg width="14" height="10" viewBox="0 0 14 10"><path d="M.5 5q6-8 13 0-7 8-13 0z" fill="#eaf4fb" stroke="#8b8b8b" /><circle cx="7" cy="5" r="3.800" fill="#2a8fcc" /><circle cx="7" cy="4.600" r="2" fill="#0b1a24" /></svg>
);
const NoIcon = ({ c }: { c: string }) => (
  <svg width="14" height="14" viewBox="0 0 14 14" fill="none" stroke={c} strokeWidth="2.200"><circle cx="7" cy="7" r="5.700" fill="#f4f4f4" /><path d="M3.500 10.500l7-7" /></svg>
);

/* ---------- vector glyphs: "column:angle" per grid row ---------- */
const FIELD: string[] = [
  "1:0 2:0 3:0 5:0 6:0 7:0 14:0 15:0 16:0 20:0 19:0",
  "2:50 3:26 4:16 5:13 7:7 8:4 9:3 10:1 11:1 13:0 15:-1 16:-3 17:-6 19:-37 20:0",
  "0:0 1:90 2:65 3:49 5:26 6:19 7:14 8:9 9:5 10:3 11:1 12:-1 13:-3 14:-4 15:-8 16:-12 17:-25 20:0",
  "0:0 1:77 2:67 3:57 5:37 6:27 8:17 12:1 13:-4 14:-7 15:-14 16:-25 17:-42 18:-72 19:-84",
  "0:0 1:77 2:69 3:60 4:53 5:44 6:35 7:27 8:20 9:13 11:4 13:-9 14:-16 15:-27 18:-81 19:-88",
  "0:0 1:80 2:73 3:65 4:58 5:50 7:37 8:27 9:15 10:10 11:1 12:-7 14:-28 15:-42 16:-56 17:-71 18:-87 19:-89",
  "0:0 1:84 2:77 4:66 5:58 6:52 7:45 8:34 9:22 10:11 12:-12 13:-26 14:-40 15:-55 17:-79 18:-88 19:-89",
  "0:0 1:88 2:82 3:76 4:72 7:53 8:43 9:32 10:14 12:-23 13:-36 14:-53 16:-77 17:-86 18:-90 19:-90",
  "1:88 2:86 4:80 5:76 6:72 8:55 9:43 11:-6 12:-32 13:-53 15:-76 16:-84 17:-89 18:-90 19:-90",
  "1:89 4:84 6:80 7:76 8:73 9:59 11:-20 14:-82 15:-87 17:-90 18:-91 19:-90",
  "0:0 2:89 3:90 5:89 6:90 7:89 8:90 10:96 12:-95 15:-91 16:-92 17:-91 18:-91 19:-90 20:0",
  "0:0 1:90 3:91 4:94 5:96 6:98 7:102 8:109 9:119 11:-162 13:-113 14:-106 15:-100 17:-92 18:-91 19:-91",
  "1:91 3:95 4:98 5:101 7:117 8:127 9:140 10:163 11:-171 12:-146 13:-129 14:-113 15:-106 16:-98 17:-95 18:-93 19:-91 20:0",
  "0:0 2:100 3:103 4:107 6:120 9:153 12:-159 13:-142 14:-130 16:-108 17:-101 18:-96 19:-92",
  "2:104 3:110 4:116 5:123 6:129 8:151 9:161 11:-177 12:-166 13:-152 14:-139 15:-130 16:-119 17:-109 20:0",
  "0:0 2:109 3:118 4:126 5:133 7:149 8:157 9:165 10:173 11:176 12:-171 13:-161 14:-152 15:-142 16:-130 18:-107 19:-97 20:0",
  "0:0 1:111 3:123 4:132 5:141 7:156 8:162 9:168 10:173 11:176 12:-176 13:-168 14:-160 15:-150 16:-139 17:-125 18:-114 19:-103 20:0",
  "0:0 1:120 2:126 3:136 4:145 5:152 6:157 7:163 9:171 13:-171 15:-160 16:-148 17:-136 18:-121 19:-109 20:0",
  "1:130 2:133 3:143 4:152 5:159 6:164 7:169 8:172 9:175 10:176 11:178 12:179 13:-178 14:-174 15:-168 16:-159 17:-150 18:-135 20:0",
  "1:144 2:142 3:151 4:158 5:167 6:170 8:174 9:175 10:177 12:180 14:-176 16:-169 17:-162 18:-152 19:-139",
  "0:0 2:0 5:0 7:0 8:0 11:0 12:0 13:0 16:0 19:0",
];
type Tone = [string, string];
const shade = (c: number, r: number): Tone => {
  const dark: Tone = ["#32419a", "#232c6c"];
  if (r === 0) return c === 20 ? ["#dcc4b6", "#a08d84"] : ["#a80a24", "#74051a"];
  if (c === 0 || c === 20 || r === 20) return dark;
  if (r === 1 && c > 7) return ["#5b7bc2", "#435c98"];
  if (c === 19 && r < 15 && r > 1) return ["#4f6db2", "#394f88"];
  if (r + (c < 6 ? 4 - 1.3 * c : 0) > 17.75 && c < 5) return dark;
  if (c < 4 && r < 5 && r + c < 6) return ["#3546a0", "#262f74"];
  if (r > 18 && c > 17) return dark;
  if (r === 3 && c > 15 && c < 18) return dark;
  if (c > 13 && c < 18 && r > 3 && r < 9 && r - (c - 14) > 1.5) return dark;
  if (Math.hypot(c - 11.3, r - 9.8) < 5.6) return dark;
  return ["#425db0", "#304282"];
};
const Glyph = ({ c, r, a }: { c: number; r: number; a: number }) => {
  const [light, dark] = shade(c, r);
  const flip = Math.cos((a * Math.PI) / 180) < 0 ? -1 : 1;
  return (
    <g transform={`translate(${722.3 + 15.97 * c} ${300.7 + 15.98 * r}) rotate(${-a}) scale(1 ${flip})`}>
      <path d="M0-.9H20.500V.9H0z" fill={c === 20 && r === 0 ? "#b8a9a4" : light} />
      <path d="M0 .4H20.500V.9H0z" fill={dark} />
      <path d="M20-3.200L31 0 20 .9z" fill={light} />
      <path d="M20 .7L31 0 20 3.200z" fill={dark} />
    </g>
  );
};
const BAND = ["#b40426", "#d24b40", "#ea7b60", "#f6a283", "#f2c0a8", "#e6d4ca", "#d0daea", "#b3cdfb", "#93b5fe", "#7396f5", "#5673e0", "#3b4cc0"];
const TICKS = ["1.0e+00", "0.8", "0.6", "0.4", "0.2", "0.0e+00"];

const Scene = () => (
  <svg width="960" height="469" viewBox="402 226 960 469">
    {FIELD.map((row, r) => row.split(" ").map((e) => {
      const [c, a] = e.split(":").map(Number);
      return <Glyph key={c + "-" + r} c={c} r={r} a={a} />;
    }))}
    {BAND.map((b, i) => <rect key={b} x="1245" y={239.7 + i * 12.82} width="16" height="12.900" fill={b} />)}
    {TICKS.map((t, i) => (
      <g key={t}>
        <path d={`M1257 ${239.5 + i * 30.8}h11`} stroke="#fff" strokeWidth="1.200" />
        <text x="1274.500" y={244.3 + i * 30.8} fontFamily="Lato, sans-serif" fontWeight="300" fontSize="16.500" fill="#fff" textLength={t.length > 3 ? 61 : 23} lengthAdjust="spacingAndGlyphs">{t}</text>
      </g>
    ))}
    <text transform="translate(1352 366) rotate(-90)" fontFamily="Lato, sans-serif" fontWeight="300" fontSize="16.500" fill="#fff" textLength="100" lengthAdjust="spacingAndGlyphs">U Magnitude</text>
    <path d="M461.500 635V609" stroke="#b9b9a0" />
    <path d="M459 610.500l2.500-7 2.500 7z" fill="#e6e640" />
    <path d="M463 635.500h24" stroke="#a04050" />
    <path d="M486 632.500l7 3-7 3z" fill="#e01818" />
    <circle cx="461.500" cy="635.500" r="2.400" fill="#0c5a18" />
    <g fontFamily="Lato, sans-serif" fontSize="9" fontWeight="700" fill="#fff">
      <text x="462.500" y="610">Y</text><text x="463.500" y="635">Z</text><text x="488.500" y="635">X</text>
    </g>
  </svg>
);

const MENUS: [string, number, number][] = [["File", 35, 0], ["Edit", 38, 0], ["View", 44, 0], ["Sources", 60, 0], ["Filters", 51, 2], ["Extractors", 74, 1], ["Tools", 45, 0], ["Catalyst", 61, 0], ["Macros", 57, 0], ["Help", 40, 0]];

export default function App() {
  return (
    <Screen>
      <Global />
      <TitleBar>
        <span />
        <WindowTitle>ParaView 5.11.2</WindowTitle>
        <WindowControls>
          <svg width="84" height="20" viewBox="0 0 84 20" fill="none" stroke="#e8e8e8">
            <path d="M14 13.500h8" strokeWidth="1.300" />
            <rect x="41" y="8" width="6.500" height="6" /><path d="M43 8V6h6.500v6.500h-2" />
            <circle cx="74.500" cy="10" r="8.700" fill="#35a854" stroke="none" />
            <path d="M71.500 7l6 6M77.500 7l-6 6" strokeWidth="1.600" stroke="#fff" />
          </svg>
        </WindowControls>
      </TitleBar>
      <MenuBar>
        {MENUS.map(([t, w, k]) => (
          <MenuItem key={t} $w={w}>{t.slice(0, k)}<u>{t[k]}</u>{t.slice(k + 1)}</MenuItem>
        ))}
      </MenuBar>
      <ToolBar $h={39}>
        <Handle w={13} />
        <Tools names="open load save reset pvload | connect disconnect recent | undo redo | extract cmap palette" />
        <Handle />
        <Tools names="first prev back play next last loop" />
        <Handle />
        <TimeLabel>Time:</TimeLabel>
        <Combo $w={47}>10<Caret /></Combo>
        <Spin>20<SpinArrows><Caret $up $c="#999" /><Caret /></SpinArrows></Spin>
        <NarrowText>max is 20</NarrowText>
        <Handle w={16} />
        <Tools names="camWrench camAdd" />
      </ToolBar>
      <ToolBar $h={39}>
        <Handle w={13} />
        <Tools names="legend editmap link rescale rescaleC rescaleT rescaleV" on={["legend"]} />
        <Combo $w={162} $ml={1}>
          <IconText><svg width="19" height="10"><rect x="6" y="2.500" width="4" height="4" fill={YEL} stroke="#c99a30" strokeWidth=".7" /></svg>U</IconText>
          <Caret />
        </Combo>
        <Combo $w={79} $ml={5}><Clip $w={52}>Magnitude</Clip><Caret /></Combo>
        <Handle />
        <Combo $w={150}>Surface<Caret /></Combo>
        <Handle />
        <Tools names="fit fitData fitC fitD zoomBox pX mX pY mY pZ mZ iso r90 l90" />
        <Handle />
        <Tools names="axes ringA ringB ringC" on={["axes"]} />
        <Handle />
        <Tools names="bulb" on={["bulb"]} />
        <Handle w={17} />
      </ToolBar>
      <ToolBar $h={38}>
        <Handle w={12} />
        <Tools w={33} names="calc contour clip slice threshold subset glyph stream warp group level" />
        <Handle w={16} />
        <Tools w={33} names="boxplot selOver hist timeA overLine timeB probe prog" />
        <Handle w={16} />
        <Tools w={33} names="ruler" />
      </ToolBar>
      <Main>
        <Dock>
          <DockBody>
            <DockHeader $h={20}>Pipeline Browser<HeaderButtons><FloatIcon /><CloseIcon /></HeaderButtons></DockHeader>
            <Tree>
              <TreeRow>
                <EyeCell />
                <TreeItem>
                  <svg width="18" height="22" viewBox="0 0 18 22"><path d="M9.500 0v4M9.500 19v3" stroke="#888" /><rect x="6" y="5" width="7" height="13" fill="#bbb" stroke="#333" /><path d="M7.500 7.500h4M7.500 10h4" stroke="#111" /></svg>
                  <TreeLabel>builtin:</TreeLabel>
                </TreeItem>
              </TreeRow>
              <TreeRow><EyeCell><EyeClosed /></EyeCell><TreeItem><Cube /><TreeLabel>cavity.OpenFOAM</TreeLabel></TreeItem></TreeRow>
              <TreeRow><EyeCell><EyeClosed /></EyeCell><TreeItem><Cube /><TreeLabel>Slice1</TreeLabel></TreeItem></TreeRow>
              <TreeRow>
                <EyeCell><EyeClosed /></EyeCell>
                <TreeItem><svg width="18" height="26"><path d="M9.500 0v26M9.500 13.500h9" stroke="#888" /></svg><Cube /><TreeLabel>Contour1</TreeLabel></TreeItem>
              </TreeRow>
              <TreeRow>
                <EyeCell><EyeOpen /></EyeCell>
                <TreeItem $sel><svg width="18" height="18"><path d="M9.500 0v9.500h9" stroke="#5f87a0" fill="none" /></svg><Cube sel /><TreeLabel>Glyph1</TreeLabel></TreeItem>
              </TreeRow>
            </Tree>
            <DotRow><i /></DotRow>
            <Tabs $h={27}>
              <Tab $w={87} $on>Properties</Tab>
              <Tab $w={93}>Information</Tab>
            </Tabs>
            <DockHeader $h={21}>Properties<HeaderButtons><FloatIcon /><CloseIcon /></HeaderButtons></DockHeader>
            <PushRow>
              <Push $dim><svg width="13" height="13" viewBox="0 0 13 13" fill="#c4c4c4" stroke="#b0b0b0"><path d="M1 6l4-2 3 2v5l-4 2-3-2z" /><path d="M6 5l3-2-1-2h5v5l-2-1-3 2z" /></svg>Apply</Push>
              <Push $dim><NoIcon c="#a8a8a8" />Reset</Push>
              <Push><svg width="12" height="12" viewBox="0 0 12 12"><path d="M2.500 2.500l7 7M9.500 2.500l-7 7" stroke="#d8262a" strokeWidth="3.600" /></svg>Delete</Push>
              <Push><svg width="12" height="16" viewBox="0 0 12 16" fill="none" stroke="#8db474" strokeWidth="2.300"><path d="M2 5q0-3.500 4-3.500T10 5q0 2.500-4 4.500v1.500M6 12.500V15" /></svg></Push>
            </PushRow>
            <SearchRow>
              <LineEdit $w={348} $dim>Search ... (use Esc to clear text)</LineEdit>
              <SmallButton><svg width="16" height="16" viewBox="0 0 16 16"><circle cx="8" cy="8" r="4" fill="none" stroke="#b0b0b0" strokeWidth="3" /><circle cx="8" cy="8" r="6.300" fill="none" stroke="#a8a8a8" strokeWidth="1.800" strokeDasharray="3 1.950" /></svg></SmallButton>
            </SearchRow>
            <ScrollArea>
              <Form>
                <FormRow $h={25} $mt={3}><FormLabel>Scale Array</FormLabel><Combo $w={400}><IconText><Gap $w={2} /><NoIcon c="#cc3038" /><Gap $w={4} />No scale array</IconText></Combo></FormRow>
                <FormRow $h={30} $mt={4}>
                  <FormLabel>{"Scale\nFactor"}</FormLabel>
                  <FactorFields>
                    <Slider><SliderTrack /><SliderThumb /></Slider>
                    <LineEdit $w={125}>0.01</LineEdit>
                    <FactorButton><svg width="18" height="18" viewBox="0 0 18 18"><path d="M4.500 5.500l6.500 6.500M11 5.500L4.500 12" stroke="#222" strokeWidth="2.200" /><path d="M13 14h5l-2.500 2.500z" fill="#444" /></svg></FactorButton>
                    <FactorButton><svg width="16" height="16" viewBox="0 0 16 16" fill="none" stroke="#2a8fcc" strokeWidth="2.400"><path d="M2 7q1-5 6-5 3 0 5 3M2 9q1 5 6 5 4 0 5-3" /></svg></FactorButton>
                  </FactorFields>
                </FormRow>
                <GroupTitle>Masking</GroupTitle>
                <FormRow $h={30} $mt={6}><FormLabel>{"Glyph\nMode"}</FormLabel><Combo $w={400}><NarrowText>Uniform Spatial Distribution (Bounds Based)</NarrowText></Combo></FormRow>
                <FormRow $h={60} $mt={5}><FormLabel>{"Maximum\nNumber Of\nSample\nPoints"}</FormLabel><LineEdit $w={400}>5000</LineEdit></FormRow>
              </Form>
              <VScroll>
                <ScrollArrow $edge="bottom"><Caret $up /></ScrollArrow>
                <Thumb />
                <Fill />
                <ScrollArrow $edge="top"><Caret /></ScrollArrow>
              </VScroll>
              <HScroll>
                <ScrollArrow $edge="right"><svg width="5" height="8"><path d="M5 0v8L0 4z" fill="#505050" /></svg></ScrollArrow>
                <HThumb />
                <Fill />
                <ScrollArrow $edge="left"><svg width="5" height="8"><path d="M0 0v8l5-4z" fill="#505050" /></svg></ScrollArrow>
              </HScroll>
            </ScrollArea>
          </DockBody>
          <DockSplitter><HandleDots /></DockSplitter>
        </Dock>
        <ViewPane>
          <Tabs $h={28}>
            <Tab $w={118} $on $bg="linear-gradient(#fff, #fbfbfb)">
              <svg width="17" height="16" viewBox="0 0 17 16"><rect x="1" y="1" width="14" height="13.500" fill="#fff" stroke="#3a3a3a" strokeWidth="1.500" /><path d="M.5 2.500h15" stroke="#3a3a3a" strokeWidth="4" /></svg>
              <Gap $w={3} />Layout #1<Gap $w={3} /><CloseIcon /><Gap $w={2} />
            </Tab>
            <Tab $w={30} $bg="#e6e6e6">+</Tab>
          </Tabs>
          <ViewTools>
            <Tools w={26} names="vUndo vRedo | vShot | v3D vCam | sAdd sSub sTog | sCell sPt sFr sFrP sPoly sPolyP sBlk sCube hPt iCell iPt qCell qPt plus minus clear" />
            <ViewName>RenderView1</ViewName>
            <FrameButton><svg width="14" height="14"><rect x=".5" y=".5" width="12" height="13" fill="#d3d9ec" stroke="#98a0b8" /><path d="M6.500 0v14" stroke="#98a0b8" /></svg></FrameButton>
            <FrameButton><svg width="14" height="14"><rect x=".5" y=".5" width="12" height="13" fill="#d3d9ec" stroke="#98a0b8" /><path d="M0 7h13" stroke="#98a0b8" /></svg></FrameButton>
            <FrameButton><svg width="18" height="17"><rect x="1" y="1" width="16" height="15" fill="#f4f4f4" stroke="#333" strokeWidth="1.500" /><path d="M0 3h18" stroke="#333" strokeWidth="5" /></svg></FrameButton>
            <FrameButton><CloseIcon /></FrameButton>
          </ViewTools>
          <Viewport><Scene /></Viewport>
        </ViewPane>
      </Main>
      <StatusBar>
        <SmallButton $w={20}><svg width="10" height="10"><path d="M2 2l6 6M8 2L2 8" stroke="#a0a0a0" strokeWidth="2.600" /></svg></SmallButton>
        <StatusWell />
        <MemoryBar>viraj-Lenovo-ideapad-320-15IKB: 4.2 GiB/7.5 GiB 55.3%</MemoryBar>
      </StatusBar>
      <Panel>
        <PanelApp $w={53} $line>
          <svg width="34" height="34" viewBox="0 0 34 34" fill="none" stroke="#e8e8e8"><circle cx="15.500" cy="17" r="14.300" strokeWidth="2.600" /><path d="M9.500 10v9.500q0 3 3 3h7q3 0 3-3V15q0-2-1.800-2t-2 2v4.500M18.700 15q0-2-2.500-2t-2 2v4.500" strokeWidth="2.300" /></svg>
        </PanelApp>
        <PanelApp $w={53}>
          <svg width="28" height="28" viewBox="0 0 28 28"><path d="M0 3q0-2 2-2h8l3 4h13q2 0 2 2v8H0z" fill="#2a9445" /><path d="M2 6h24v6H2z" fill="#dff0e0" /><path d="M0 9h28v15q0 2-2 2H2q-2 0-2-2z" fill="#51c374" /></svg>
        </PanelApp>
        <PanelApp $w={36} $run>
          <svg width="30" height="30" viewBox="0 0 30 30"><rect x="1" y="1" width="28" height="28" rx="6" fill="#ff6b3d" /><path d="M8 12q1-4 3-5 0 2 2 3 3-5 2-6 6 3 8 9 1 10-8 12-9-1-9-9 0-2 2-4z" fill="#fff" /><path d="M11 14q3-1 4 0-1 1-2 1 1 2 3 1 3-2 1-5 4 3 3 7-2 4-6 3-4-2-3-7z" fill="#ff7a45" /></svg>
        </PanelApp>
        <PanelApp $w={52}>
          <svg width="30" height="30" viewBox="0 0 30 30"><rect x="1" y="1" width="28" height="28" rx="5" fill="#2a2a2a" stroke="#444" /><text x="4" y="13" fontFamily="Liberation Mono" fontSize="9" fontWeight="700" fill="#e8e8e8">$_</text></svg>
        </PanelApp>
        <PanelApp $w={36} $run>
          <svg width="30" height="30" viewBox="0 0 30 30"><rect x="1" y="1" width="28" height="28" rx="6" fill="#1e95dc" /><path d="M21 6l4 1.800v14.400L21 24 6 11.500l2-1.800 13 9.800V10.500L8 20.300l-2-1.800z" fill="#fff" /></svg>
        </PanelApp>
        <PanelApp $w={7} />
        <PanelApp $w={38} $run $active>
          <svg width="28" height="22" viewBox="0 0 28 22"><path d="M5 1h6L7 21H1z" fill="#c8202f" /><path d="M13 1h6l-4 20H9z" fill="#2b9c46" /><path d="M21 1h6l-4 20h-6z" fill="#15508f" /></svg>
        </PanelApp>
        <Tray>
          <TrayCell $w={26}><svg width="12" height="16" viewBox="0 0 12 16"><ellipse cx="6" cy="8" rx="5" ry="7.500" fill="#5c5c5c" /><path d="M3 5l6 5.500-3 2.500V3l3 2.500L3 11" stroke="#222" fill="none" /></svg></TrayCell>
          <TrayCell $w={26}><svg width="18" height="18" viewBox="0 0 18 18"><path d="M9 1q3 2 6.500 2 0 9-6.500 13Q2.500 12 2.500 3 6 3 9 1z" fill="none" stroke="#e6e6e6" strokeWidth="1.600" /><path d="M9 4q2 1 4 1 0 6-4 8.500z" fill="#e6e6e6" /><circle cx="14" cy="14" r="3.500" fill="#f07030" /></svg></TrayCell>
          <TrayCell $w={28}><svg width="18" height="14" viewBox="0 0 18 14"><ellipse cx="9" cy="7" rx="7.500" ry="5" transform="rotate(-12 9 7)" fill="none" stroke="#ccc" strokeWidth="1.200" /><text x="3.500" y="9.300" fontFamily="Noto Sans" fontSize="6.500" fontWeight="700" fill="#ddd" textLength="11">intel</text></svg></TrayCell>
          <TrayCell $w={28}><svg width="18" height="16" viewBox="0 0 18 16" fill="#eee"><path d="M6 0h6v5H6zM0 11h6v5H0zM12 11h6v5h-6zM8.300 5h1.400v3H16v3h-1.500V9.400h-11V11H2V8h6.300z" /></svg></TrayCell>
          <TrayCell $w={28}><svg width="14" height="14" viewBox="0 0 14 14" fill="#eee"><path d="M4 1l9-1v10.500a2.300 2 0 1 1-1.500-2V3l-6 .7v8.300a2.300 2 0 1 1-1.500-2z" /></svg></TrayCell>
          <TrayCell $w={28}><svg width="18" height="18" viewBox="0 0 18 18"><circle cx="9" cy="9" r="4.200" fill="#eee" />{[0, 45, 90, 135, 180, 225, 270, 315].map((a) => <path key={a} d="M9 3.200l-1-2.200h2z" fill="#eee" stroke="#eee" transform={`rotate(${a} 9 9)`} />)}</svg></TrayCell>
          <Clock>19:36</Clock>
          <PanelEdge />
        </Tray>
      </Panel>
    </Screen>
  );
}
